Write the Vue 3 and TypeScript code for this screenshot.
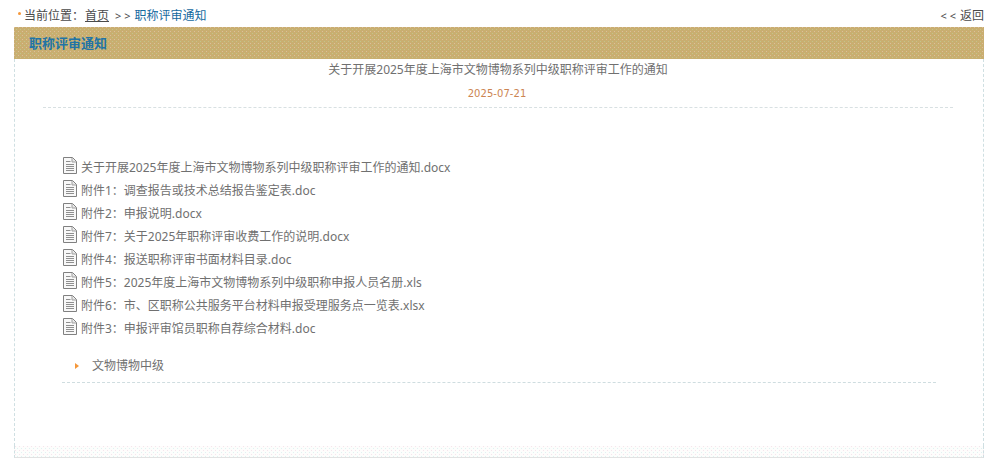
<script setup lang="ts">
const files: string[] = [
  '关于开展2025年度上海市文物博物系列中级职称评审工作的通知.docx',
  '附件1：调查报告或技术总结报告鉴定表.doc',
  '附件2：申报说明.docx',
  '附件7：关于2025年职称评审收费工作的说明.docx',
  '附件4：报送职称评审书面材料目录.doc',
  '附件5：2025年度上海市文物博物系列中级职称申报人员名册.xls',
  '附件6：市、区职称公共服务平台材料申报受理服务点一览表.xlsx',
  '附件3：申报评审馆员职称自荐综合材料.doc',
]
</script>

<template>
  <div class="page">
    <div class="crumb">
      <div class="trail">
        <span class="dot"></span>
        <span>当前位置：</span>
        <a class="home">首页</a>
        <span class="sep">&gt; &gt;</span>
        <a class="current">职称评审通知</a>
      </div>
      <a class="back"><span class="sep">&lt; &lt;</span> 返回</a>
    </div>
    <div class="panel">
      <div class="panel-head">职称评审通知</div>
      <div class="panel-body">
        <div class="title">关于开展2025年度上海市文物博物系列中级职称评审工作的通知</div>
        <div class="date">2025-07-21</div>
        <ul class="files">
          <li v-for="f in files" :key="f" class="file">
            <svg class="doc" width="14" height="17" viewBox="0 0 14 17" fill="none">
              <path d="M0.5 0.5H9.5L13.5 4.5V16.5H0.5Z" fill="#f8f8f8" stroke="#808080" />
              <path d="M9 1V5H13" stroke="#a0a0a0" fill="#e6e6e6" />
              <path d="M3 4.5H7.5M3 7.5H11M3 9.5H11M3 11.5H11M3 13.5H11" stroke="#8f8f8f" />
            </svg>
            <span>{{ f }}</span>
          </li>
        </ul>
        <div class="tag-row">
          <span class="arrow"></span>
          <span>文物博物中级</span>
        </div>
      </div>
      <div class="panel-foot"></div>
    </div>
  </div>
</template>

<style>
html, body { margin: 0; background: #fff; }
</style>

<style scoped>
.page {
  width: 992px;
  height: 462px;
  box-sizing: border-box;
  padding: 0 8px 4px 14px;
  font: 12px/18px "Noto Sans", "Noto Sans CJK SC", sans-serif;
  color: #707070;
  overflow: hidden;
}
.crumb {
  height: 27px;
  padding-top: 7px;
  box-sizing: border-box;
  display: flex;
  justify-content: space-between;
}
.trail { display: flex; align-items: center; height: 18px; color: #4a4a4a; margin-left: 4px; }
.dot { width: 3px; height: 3px; border-radius: 50%; background: #f5973a; margin: -5px 3px 0 0; }
.home { color: #4a4a4a; text-decoration: underline; margin: 0 5px 0 1px; width: 25px; }
.sep { font-size: 11px; color: #4a4a4a; margin-right: 4px; }
.current { color: #15699e; }
.back { color: #4a4a4a; display: flex; align-items: center; height: 18px; }
.back .sep { margin-right: 4px; }
.panel {
  height: 431px;
  display: flex;
  flex-direction: column;
}
.panel-head {
  height: 32px;
  flex: none;
  box-sizing: border-box;
  padding: 7px 0 0 15px;
  font-size: 13px;
  font-weight: 700;
  color: #2174a6;
  background-color: #c9ae70;
  background-image:
    radial-gradient(circle at 0.5px 0.5px, #dcbf9a 0.6px, transparent 0.7px),
    radial-gradient(circle at 2.5px 2.5px, #c3c48a 0.6px, transparent 0.7px);
  background-size: 4px 4px;
}
.panel-body {
  flex: 1;
  box-sizing: border-box;
  border-left: 1px dashed #cfdfe2;
  border-right: 1px dashed #cfdfe2;
  padding: 0 47px;
  display: flex;
  flex-direction: column;
}
.title {
  text-align: center;
  height: 22px;
  line-height: 21px;
  margin: 0 -17px 0 -19px;
}
.date {
  text-align: center;
  height: 26px;
  margin: 0 -17px 0 -19px;
  padding-right: 2px;
  border-bottom: 1px dashed #d8e0e2;
  font: 10px/25px "DejaVu Sans", sans-serif;
  letter-spacing: 0.05px;
  color: #cc8552;
}
.files {
  list-style: none;
  margin: 48px 0 0;
  padding: 0;
}
.file {
  height: 23px;
  display: flex;
  align-items: center;
  gap: 4px;
  padding-left: 1px;
}
.doc { flex: none; margin-top: -5px; }
.tag-row {
  margin-top: 15px;
  height: 27px;
  padding-left: 13px;
  display: flex;
  align-items: flex-start;
  gap: 13px;
  border-bottom: 1px dashed #cfdde0;
  line-height: 22px;
}
.arrow {
  width: 0;
  height: 0;
  margin-top: 8px;
  border-left: 4px solid #f5973a;
  border-top: 3px solid transparent;
  border-bottom: 3px solid transparent;
}
.panel-foot {
  height: 11px;
  flex: none;
  background-color: #fdfdfc;
  background-image:
    radial-gradient(circle at 0.5px 0.5px, #f6e4ec 0.6px, transparent 0.7px),
    radial-gradient(circle at 2.5px 2.5px, #dff3f3 0.6px, transparent 0.7px);
  background-size: 4px 4px;
  border-left: 1px dashed #cfdfe2;
  border-right: 1px dashed #cfdfe2;
  border-bottom: 1px solid #e2e2e2;
}
</style>
